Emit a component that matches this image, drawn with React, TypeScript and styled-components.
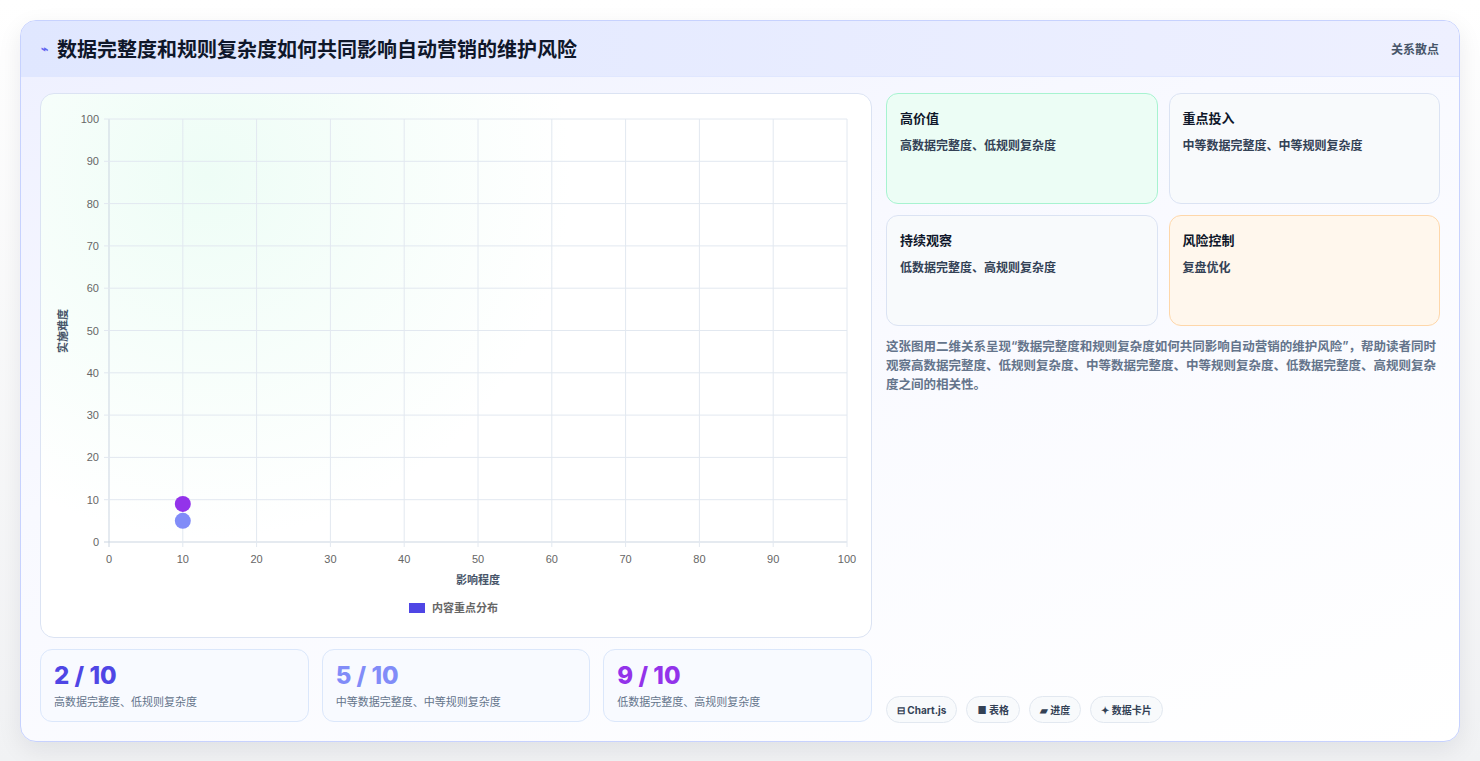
import styled, { createGlobalStyle } from 'styled-components';

const GlobalStyle = createGlobalStyle`
  body {
    margin: 0;
    background: #f3f4f6;
    font-family: Inter, "Noto Sans CJK SC", sans-serif;
  }
`;

const S = {
  Page: styled.div`
    padding: 20px;
    height: 761px;
    box-sizing: border-box;
    background: linear-gradient(180deg, #ffffff 0%, #f1f2f4 100%);
  `,
  Card: styled.div`
    height: 720px;
    border: 1px solid #c7d2fe;
    border-radius: 16px;
    background: linear-gradient(160deg, #eef0ff 0%, #f8f9ff 40%, #ffffff 100%);
    box-shadow: 0 8px 24px rgba(15, 23, 42, 0.08);
    overflow: hidden;
    display: flex;
    flex-direction: column;
  `,
  Header: styled.div`
    height: 55px;
    display: flex;
    align-items: center;
    justify-content: space-between;
    padding: 0 20px;
    background: linear-gradient(90deg, #e0e7ff 0%, #eef0ff 100%);
    border-bottom: 1px solid #e0e7ff;
  `,
  Title: styled.h1`
    margin: 0;
    display: flex;
    align-items: center;
    gap: 9px;
    font-size: 20px;
    font-weight: 700;
    color: #0f172a;
  `,
  Bolt: styled.span`
    color: #6366f1;
    font-size: 12px;
  `,
  Kind: styled.span`
    font-size: 12px;
    font-weight: 600;
    color: #475569;
  `,
  Body: styled.div`
    flex: 1;
    display: grid;
    grid-template-columns: 832px 1fr;
    gap: 14px;
    padding: 16px 19px 18px 19px;
  `,
  Left: styled.div`
    display: flex;
    flex-direction: column;
    gap: 11px;
  `,
  ChartCard: styled.div`
    height: 543px;
    border: 1px solid #dbe3f3;
    border-radius: 14px;
    background: radial-gradient(circle at 20% 15%, #eefdf6 0%, #ffffff 45%);
    overflow: hidden;
  `,
  Stats: styled.div`
    display: grid;
    grid-template-columns: repeat(3, 1fr);
    gap: 13px;
  `,
  Stat: styled.div`
    height: 73px;
    box-sizing: border-box;
    border: 1px solid #dbe7fb;
    border-radius: 12px;
    background: #f8faff;
    padding: 12px 13px;
  `,
  StatValue: styled.div<{ $color: string }>`
    font-size: 24px;
    font-weight: 800;
    color: ${({ $color }) => $color};
    line-height: 28px;
  `,
  StatLabel: styled.div`
    font-size: 11px;
    color: #64748b;
    margin-top: 3px;
  `,
  Right: styled.div`
    display: flex;
    flex-direction: column;
  `,
  Quads: styled.div`
    display: grid;
    grid-template-columns: 1fr 1fr;
    gap: 11px 11px;
  `,
  Quad: styled.div<{ $bg: string; $border: string }>`
    height: 111px;
    box-sizing: border-box;
    border: 1px solid ${({ $border }) => $border};
    border-radius: 12px;
    background: ${({ $bg }) => $bg};
    padding: 14px 13px;
  `,
  QuadTitle: styled.div`
    font-size: 13px;
    font-weight: 700;
    color: #0f172a;
  `,
  QuadText: styled.div`
    font-size: 12px;
    font-weight: 600;
    color: #334155;
    margin-top: 9px;
  `,
  Desc: styled.p`
    margin: 11px 0 0;
    font-size: 12.5px;
    font-weight: 600;
    line-height: 19px;
    color: #64748b;
  `,
  Tags: styled.div`
    margin-top: auto;
    display: flex;
    gap: 9px;
  `,
  Tag: styled.span`
    height: 27px;
    box-sizing: border-box;
    padding: 0 10px;
    border: 1px solid #e2e8f0;
    border-radius: 14px;
    background: #f8fafc;
    display: flex;
    align-items: center;
    gap: 3px;
    font-size: 10px;
    font-weight: 700;
    color: #334155;
  `,
};

const X0 = 68;
const Y0 = 448;
const W = 738;
const H = 423;
const ticks = [0, 10, 20, 30, 40, 50, 60, 70, 80, 90, 100];
const px = (v: number) => X0 + (v / 100) * W;
const py = (v: number) => Y0 - (v / 100) * H;

function Chart() {
  return (
    <svg width="831" height="543" viewBox="0 0 831 543">
      {ticks.map((t) => (
        <g key={t}>
          <line x1={px(t)} x2={px(t)} y1={py(100)} y2={Y0 + 5} stroke={t === 0 ? '#cbd5e1' : '#e2e8f0'} />
          <line x1={X0 - 5} x2={px(100)} y1={py(t)} y2={py(t)} stroke={t === 0 ? '#cbd5e1' : '#e2e8f0'} />
          <text x={X0 - 10} y={py(t) + 4} textAnchor="end" fontSize="11" fill="#666" fontFamily="Liberation Sans, sans-serif">{t}</text>
          <text x={px(t)} y={Y0 + 21} textAnchor="middle" fontSize="11" fill="#666" fontFamily="Liberation Sans, sans-serif">{t}</text>
        </g>
      ))}
      <text x={437} y={490} textAnchor="middle" fontSize="11" fontWeight="700" fill="#475569">影响程度</text>
      <text transform="translate(26 237) rotate(-90)" textAnchor="middle" fontSize="11" fontWeight="700" fill="#475569">实施难度</text>
      <circle cx={px(10)} cy={py(5)} r="8" fill="#818cf8" />
      <circle cx={px(10)} cy={py(9)} r="8" fill="#9333ea" />
      <rect x={368} y={509} width={16} height={10} fill="#4f46e5" />
      <text x={391} y={518} fontSize="11" fontWeight="600" fill="#666">内容重点分布</text>
    </svg>
  );
}

export default function App() {
  return (
    <>
      <GlobalStyle />
      <S.Page>
        <S.Card>
          <S.Header>
            <S.Title>
              <S.Bolt>⌁</S.Bolt>数据完整度和规则复杂度如何共同影响自动营销的维护风险
            </S.Title>
            <S.Kind>关系散点</S.Kind>
          </S.Header>
          <S.Body>
            <S.Left>
              <S.ChartCard>
                <Chart />
              </S.ChartCard>
              <S.Stats>
                <S.Stat>
                  <S.StatValue $color="#4f46e5">2 / 10</S.StatValue>
                  <S.StatLabel>高数据完整度、低规则复杂度</S.StatLabel>
                </S.Stat>
                <S.Stat>
                  <S.StatValue $color="#818cf8">5 / 10</S.StatValue>
                  <S.StatLabel>中等数据完整度、中等规则复杂度</S.StatLabel>
                </S.Stat>
                <S.Stat>
                  <S.StatValue $color="#9333ea">9 / 10</S.StatValue>
                  <S.StatLabel>低数据完整度、高规则复杂度</S.StatLabel>
                </S.Stat>
              </S.Stats>
            </S.Left>
            <S.Right>
              <S.Quads>
                <S.Quad $bg="#ecfdf5" $border="#a7f3d0">
                  <S.QuadTitle>高价值</S.QuadTitle>
                  <S.QuadText>高数据完整度、低规则复杂度</S.QuadText>
                </S.Quad>
                <S.Quad $bg="#f8fafc" $border="#dbe3f3">
                  <S.QuadTitle>重点投入</S.QuadTitle>
                  <S.QuadText>中等数据完整度、中等规则复杂度</S.QuadText>
                </S.Quad>
                <S.Quad $bg="#f8fafc" $border="#dbe3f3">
                  <S.QuadTitle>持续观察</S.QuadTitle>
                  <S.QuadText>低数据完整度、高规则复杂度</S.QuadText>
                </S.Quad>
                <S.Quad $bg="#fff7ed" $border="#fed7aa">
                  <S.QuadTitle>风险控制</S.QuadTitle>
                  <S.QuadText>复盘优化</S.QuadText>
                </S.Quad>
              </S.Quads>
              <S.Desc>
                这张图用二维关系呈现“数据完整度和规则复杂度如何共同影响自动营销的维护风险”，帮助读者同时观察高数据完整度、低规则复杂度、中等数据完整度、中等规则复杂度、低数据完整度、高规则复杂度之间的相关性。
              </S.Desc>
              <S.Tags>
                <S.Tag>⊟ Chart.js</S.Tag>
                <S.Tag>■ 表格</S.Tag>
                <S.Tag>▰ 进度</S.Tag>
                <S.Tag>✦ 数据卡片</S.Tag>
              </S.Tags>
            </S.Right>
          </S.Body>
        </S.Card>
      </S.Page>
    </>
  );
}
